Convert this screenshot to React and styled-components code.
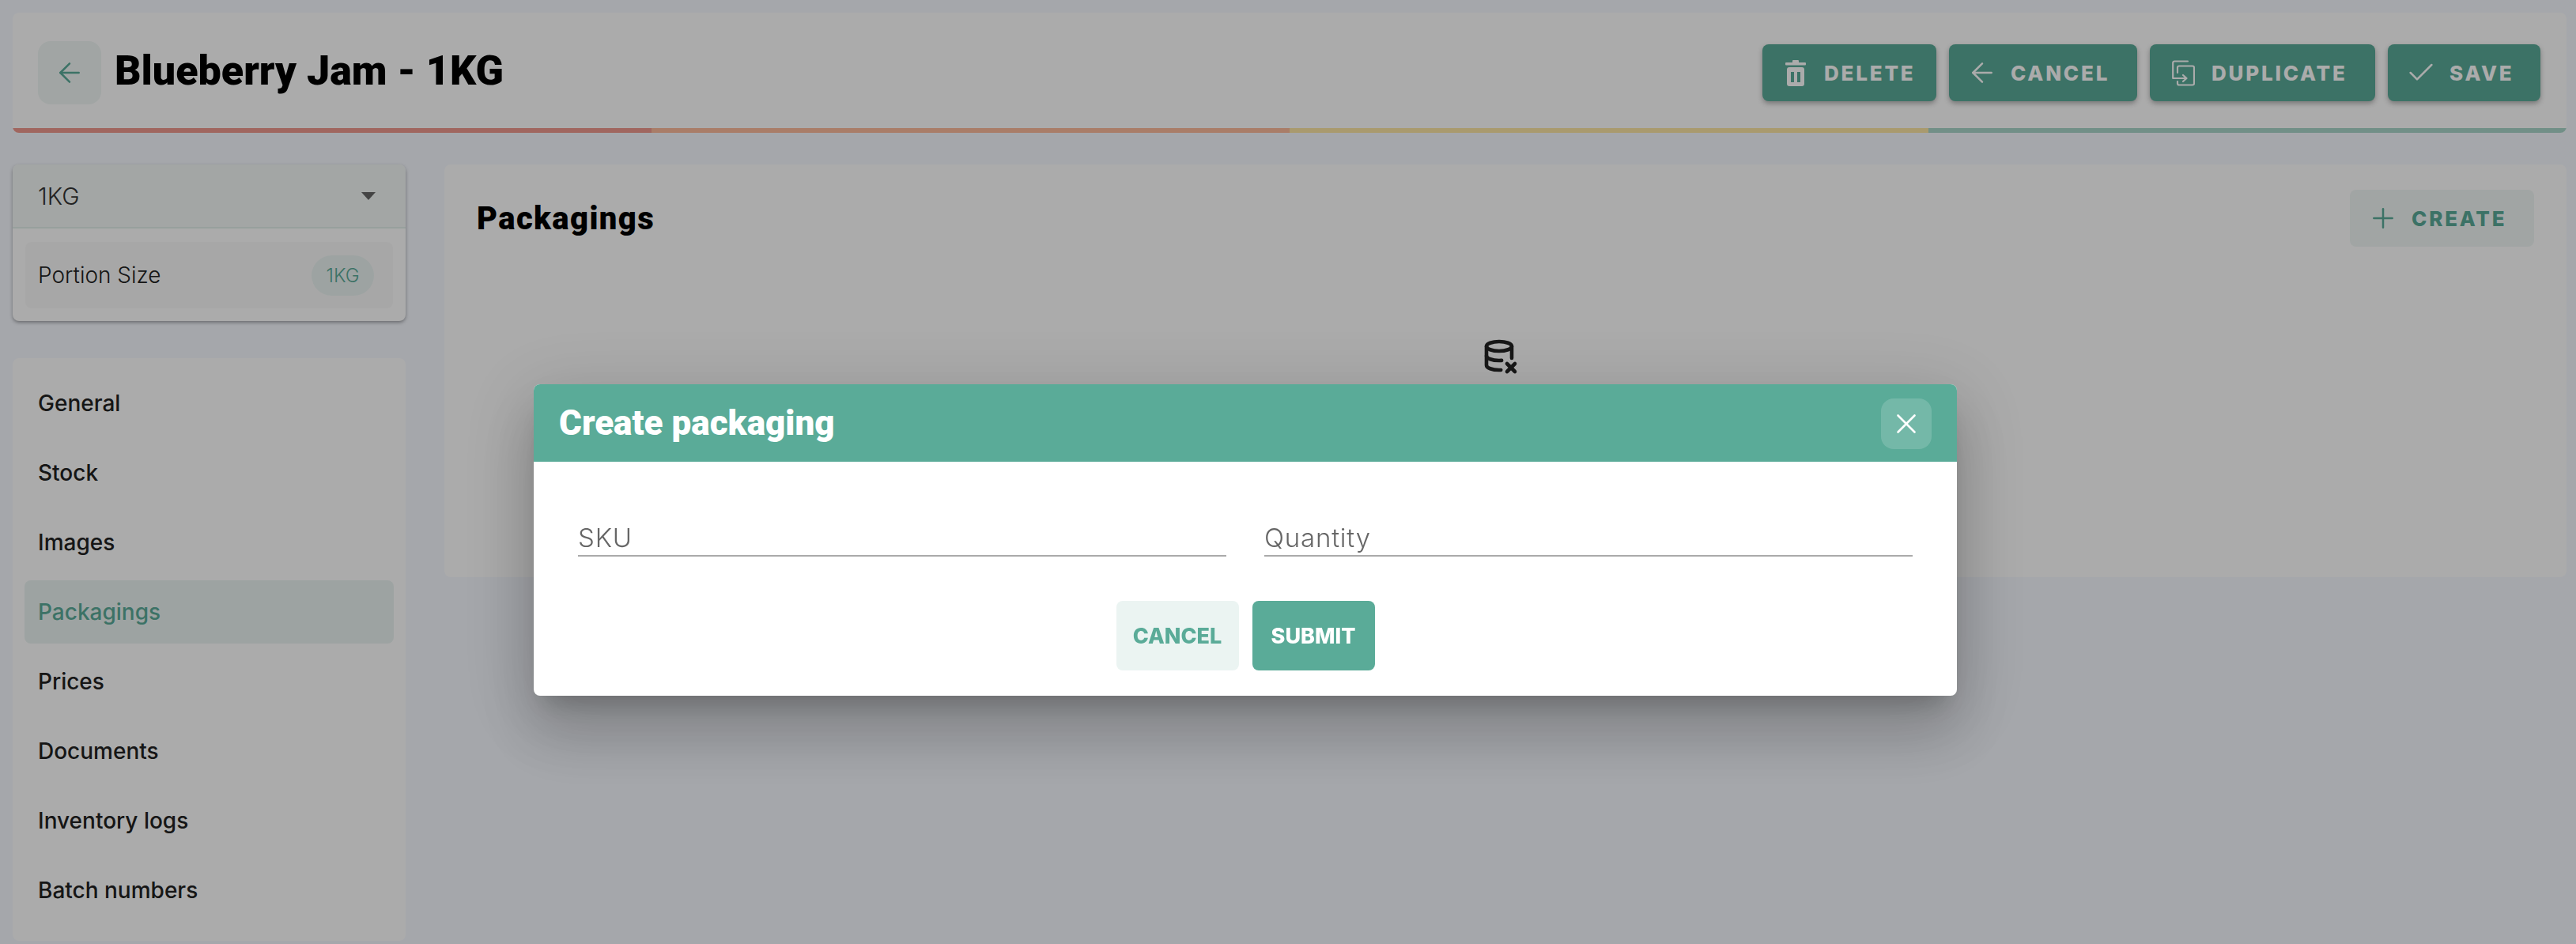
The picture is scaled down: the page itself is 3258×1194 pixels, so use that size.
import React from 'react';
import styled, { createGlobalStyle } from 'styled-components';
import { TbDatabaseX } from 'react-icons/tb';
import { LuArrowLeft, LuCheck, LuPlus, LuX } from 'react-icons/lu';

const heading = `"Roboto", "Liberation Sans", sans-serif`;
const body = `"Inter", "Noto Sans", sans-serif`;

const GlobalStyle = createGlobalStyle`
  html, body { margin: 0; padding: 0; height: 100%; }
  body { background: #f6f9ff; font-family: ${body}; overflow: hidden; }
  * { box-sizing: border-box; }
`;

const Page = styled.div`
  width: 3258px;
  height: 1194px;
  padding: 16px 12px 0 16px;
  display: flex;
  flex-direction: column;
  gap: 40px;
  overflow: hidden;
`;

const HeaderCard = styled.header`
  height: 152px;
  background: #fff;
  border-radius: 8px;
  overflow: hidden;
  display: flex;
  flex-direction: column;
`;

const HeaderRow = styled.div`
  flex: 1;
  display: flex;
  align-items: center;
  padding: 6px 33px 0 32px;
`;

const BackButton = styled.button`
  width: 80px;
  height: 80px;
  border: 0;
  border-radius: 16px;
  background: #f0f7f5;
  color: #5aab98;
  display: flex;
  align-items: center;
  justify-content: center;
  padding: 0;
`;

const Title = styled.h1`
  margin: 0 0 6px 17px;
  font: 900 52px ${heading};
  color: #000;
  flex: 1;
`;

const Actions = styled.div`
  display: flex;
  gap: 16px;
`;

const ActionButton = styled.button`
  width: ${p => p.$width}px;
  height: 72px;
  border: 0;
  padding: 0 0 0 22px;
  border-radius: 8px;
  display: flex;
  align-items: center;
  gap: 16px;
  background: ${p => (p.$soft ? '#f0f7f5' : '#5aab98')};
  color: ${p => (p.$soft ? '#5aab98' : '#fff')};
  font: 800 26px ${body};
  letter-spacing: 2.8px;
  box-shadow: ${p => (p.$soft ? 'none' : '0 3px 6px rgba(0,0,0,.3)')};
`;

const IconSlot = styled.span`
  width: 40px;
  height: 40px;
  flex-shrink: 0;
  display: flex;
  align-items: center;
  justify-content: center;
`;

const Progress = styled.div`
  display: flex;
  height: 6px;
`;

const ProgressPart = styled.div`
  flex: 1;
  background: ${p => p.$color};
`;

const Columns = styled.div`
  flex: 1;
  display: flex;
  gap: 49px;
  min-height: 0;
`;

const Side = styled.aside`
  width: 497px;
  display: flex;
  flex-direction: column;
  gap: 47px;
`;

const VariantCard = styled.div`
  height: 198px;
  background: #fff;
  border-radius: 8px;
  box-shadow: 0 2px 4px rgba(0,0,0,.35);
`;

const VariantSelect = styled.div`
  height: 81px;
  padding: 0 38px 0 32px;
  display: flex;
  align-items: center;
  justify-content: space-between;
  background: #f3f8f6;
  border-bottom: 2px solid #e2efeb;
  border-radius: 8px 8px 0 0;
  font-size: 30px;
  font-weight: 300;
  color: #333;
`;

const Caret = styled.span`
  width: 0;
  height: 0;
  border-left: 9px solid transparent;
  border-right: 9px solid transparent;
  border-top: 10px solid #666;
`;

const VariantRow = styled.div`
  height: 84px;
  margin: 17px 16px 0;
  padding: 0 24px 0 16px;
  border-radius: 8px;
  background: #fafafa;
  display: flex;
  align-items: center;
  justify-content: space-between;
  font-size: 28px;
  font-weight: 300;
  color: #222;
`;

const Pill = styled.span`
  width: 79px;
  height: 51px;
  border-radius: 26px;
  background: #ebf4f2;
  color: #5aab98;
  font-size: 24px;
  font-weight: 300;
  display: flex;
  align-items: center;
  justify-content: center;
`;

const NavCard = styled.nav`
  flex: 1;
  margin-bottom: 4px;
  background: #fff;
  border-radius: 8px;
  padding: 17px 15px;
  display: flex;
  flex-direction: column;
  gap: 8px;
`;

const NavItem = styled.div`
  height: 80px;
  flex-shrink: 0;
  padding: 0 17px;
  display: flex;
  align-items: center;
  border-radius: 8px;
  font-size: 28px;
  font-weight: 500;
  background: ${p => (p.$active ? '#ebf4f2' : 'transparent')};
  color: ${p => (p.$active ? '#5aab98' : '#222')};
`;

const Main = styled.main`
  flex: 1;
  height: 522px;
  background: #fff;
  border-radius: 8px;
  padding: 32px 41px 0;
`;

const MainHead = styled.div`
  display: flex;
  align-items: center;
  justify-content: space-between;
`;

const MainTitle = styled.h2`
  margin: 0;
  font: 900 40px ${heading};
  letter-spacing: 1.4px;
  color: #000;
`;

const EmptyState = styled.div`
  display: flex;
  justify-content: center;
  margin-top: 114px;
  padding-right: 16px;
  color: #222;
`;

const Overlay = styled.div`
  position: fixed;
  inset: 0;
  background: rgba(0, 0, 0, .33);
`;

const Dialog = styled.div`
  position: absolute;
  left: 675px;
  top: 486px;
  width: 1800px;
  height: 394px;
  background: #fff;
  border-radius: 8px;
  overflow: hidden;
  box-shadow: 0 22px 30px -14px rgba(0,0,0,.2), 0 48px 76px 6px rgba(0,0,0,.14), 0 18px 92px 16px rgba(0,0,0,.12);
`;

const DialogHead = styled.div`
  height: 98px;
  background: #5aab98;
  color: #fff;
  display: flex;
  align-items: center;
  justify-content: space-between;
  padding: 2px 32px 0;
`;

const DialogTitle = styled.h3`
  margin: 0 0 2px;
  font: 900 44px ${heading};
`;

const CloseButton = styled.button`
  width: 64px;
  height: 64px;
  border: 0;
  padding: 0;
  border-radius: 16px;
  background: rgba(255,255,255,.16);
  color: #fff;
  display: flex;
  align-items: center;
  justify-content: center;
`;

const Fields = styled.div`
  display: flex;
  gap: 48px;
  padding: 68px 56px 0;
`;

const Field = styled.div`
  flex: 1;
  height: 52px;
  border-bottom: 2px solid #aaa;
  font-size: 33px;
  font-weight: 300;
  letter-spacing: .8px;
  color: #666;
  line-height: 56px;
`;

const DialogActions = styled.div`
  display: flex;
  justify-content: center;
  gap: 17px;
  margin-top: 56px;
`;

const DialogButton = styled.button`
  width: 155px;
  height: 88px;
  border: 0;
  padding: 0;
  border-radius: 8px;
  background: ${p => (p.$primary ? '#5aab98' : '#ebf4f2')};
  color: ${p => (p.$primary ? '#fff' : '#5aab98')};
  font: 800 27px ${body};
`;

const TrashIcon = () => (
  <svg width="26" height="33" viewBox="0 0 26 33" fill="currentColor">
    <rect x="9" y="0" width="8" height="4" rx="1" />
    <rect x="0" y="3" width="26" height="3.5" rx="1" />
    <path fillRule="evenodd" d="M5 9h16a3 3 0 0 1 3 3v18a3 3 0 0 1-3 3H5a3 3 0 0 1-3-3V12a3 3 0 0 1 3-3zM7 15v13h4V15zM15 15v13h4V15z" />
  </svg>
);

const DuplicateIcon = () => (
  <svg width="29" height="33" viewBox="0 0 29 33" fill="none" stroke="currentColor" strokeWidth="2.2" strokeLinecap="round" strokeLinejoin="round">
    <path d="M20 1.5H3.2a2 2 0 0 0-2 2V23H18" />
    <path d="M14 19l4.5 4-4.5 4" />
    <path d="M7 16V9.5a2 2 0 0 1 2-2h17a2 2 0 0 1 2 2V29.5a2 2 0 0 1-2 2H9a2 2 0 0 1-2-2V27" />
  </svg>
);

const progressColors = ['#ef998e', '#fcbb9b', '#fce6a4', '#a9d6ca'];
const navItems = ['General', 'Stock', 'Images', 'Packagings', 'Prices', 'Documents', 'Inventory logs', 'Batch numbers'];

export default function App() {
  return (
    <>
      <GlobalStyle />
      <Page>
        <HeaderCard>
          <HeaderRow>
            <BackButton><LuArrowLeft size={40} strokeWidth={1.5} /></BackButton>
            <Title>Blueberry Jam - 1KG</Title>
            <Actions>
              <ActionButton $width={220}><IconSlot><TrashIcon /></IconSlot>DELETE</ActionButton>
              <ActionButton $width={238}><IconSlot><LuArrowLeft size={40} strokeWidth={1.5} /></IconSlot>CANCEL</ActionButton>
              <ActionButton $width={285}><IconSlot><DuplicateIcon /></IconSlot>DUPLICATE</ActionButton>
              <ActionButton $width={193}><IconSlot><LuCheck size={40} strokeWidth={1.5} /></IconSlot>SAVE</ActionButton>
            </Actions>
          </HeaderRow>
          <Progress>
            {progressColors.map(c => <ProgressPart key={c} $color={c} />)}
          </Progress>
        </HeaderCard>
        <Columns>
          <Side>
            <VariantCard>
              <VariantSelect>1KG<Caret /></VariantSelect>
              <VariantRow>Portion Size<Pill>1KG</Pill></VariantRow>
            </VariantCard>
            <NavCard>
              {navItems.map(item => (
                <NavItem key={item} $active={item === 'Packagings'}>{item}</NavItem>
              ))}
            </NavCard>
          </Side>
          <Main>
            <MainHead>
              <MainTitle>Packagings</MainTitle>
              <ActionButton $soft $width={233}><IconSlot><LuPlus size={40} strokeWidth={1.5} /></IconSlot>CREATE</ActionButton>
            </MainHead>
            <EmptyState><TbDatabaseX size={48} strokeWidth={2.3} /></EmptyState>
          </Main>
        </Columns>
      </Page>
      <Overlay>
        <Dialog>
          <DialogHead>
            <DialogTitle>Create packaging</DialogTitle>
            <CloseButton><LuX size={42} strokeWidth={1.5} /></CloseButton>
          </DialogHead>
          <Fields>
            <Field>SKU</Field>
            <Field>Quantity</Field>
          </Fields>
          <DialogActions>
            <DialogButton>CANCEL</DialogButton>
            <DialogButton $primary>SUBMIT</DialogButton>
          </DialogActions>
        </Dialog>
      </Overlay>
    </>
  );
}
